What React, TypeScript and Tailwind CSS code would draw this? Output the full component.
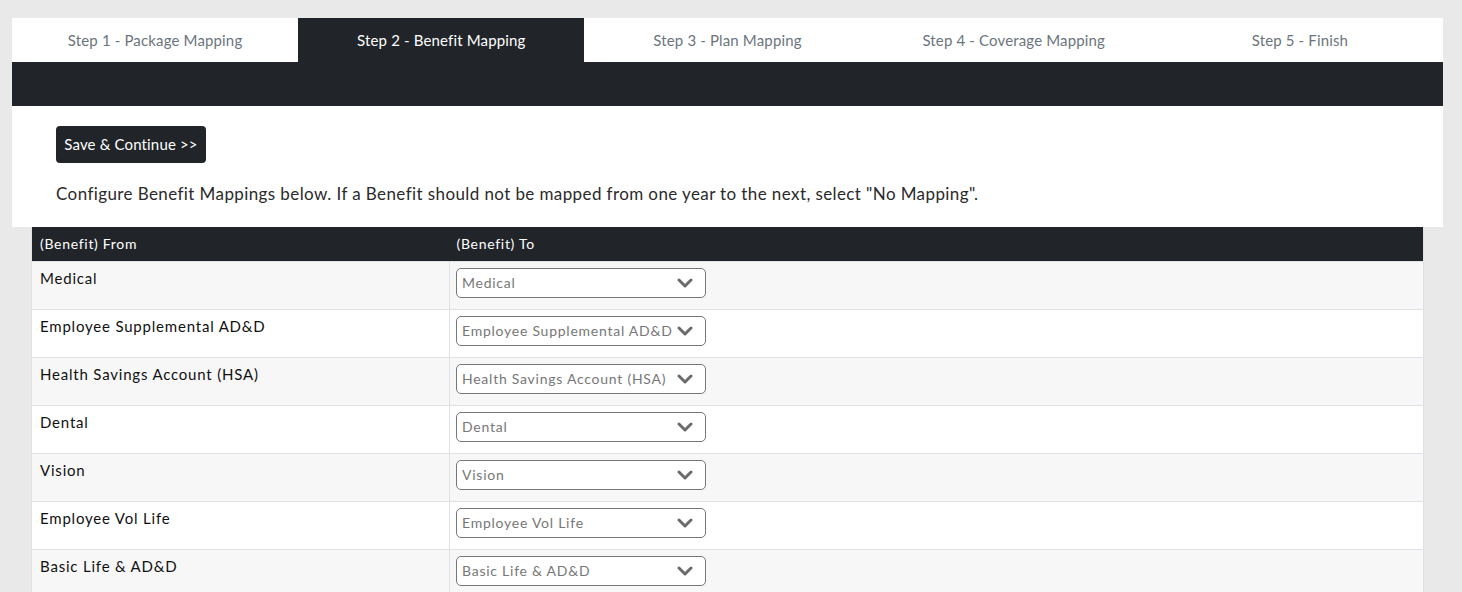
import React from "react";

const tabs = [
  "Step 1 - Package Mapping",
  "Step 2 - Benefit Mapping",
  "Step 3 - Plan Mapping",
  "Step 4 - Coverage Mapping",
  "Step 5 - Finish",
];

const rows = [
  "Medical",
  "Employee Supplemental AD&D",
  "Health Savings Account (HSA)",
  "Dental",
  "Vision",
  "Employee Vol Life",
  "Basic Life & AD&D",
];

function Chevron() {
  return (
    <svg width="16" height="10" viewBox="0 0 16 10" className="shrink-0">
      <path d="M2 2 L8 8 L14 2" fill="none" stroke="#6b6b6b" strokeWidth="3" strokeLinecap="round" strokeLinejoin="round" />
    </svg>
  );
}

export default function App() {
  return (
    <div
      className="min-h-[592px] bg-[#e9e9e9] pt-[18px] overflow-hidden"
      style={{ fontFamily: "Lato, 'Noto Sans', sans-serif" }}
    >
      <div className="ml-[12px] w-[1431px]">
        <div className="flex h-[44px] bg-white">
          {tabs.map((t, i) => (
            <div
              key={t}
              className={
                "flex-1 flex items-center justify-center text-[15px] tracking-[0.15px] " +
                (i === 1 ? "bg-[#212529] text-white" : "text-[#6c757d]")
              }
            >
              {t}
            </div>
          ))}
        </div>
        <div className="h-[44px] bg-[#212529]" />
        <div className="bg-white pl-[44px] pt-[20px] h-[121px]">
          <button className="h-[37px] w-[150px] rounded-[4px] bg-[#212529] text-white text-[15px] tracking-[0.15px]">
            Save &amp; Continue &gt;&gt;
          </button>
          <p className="mt-[19px] text-[17px] tracking-[0.4px] text-[#2a2a2a] leading-[24px]">
            Configure Benefit Mappings below. If a Benefit should not be mapped from one year to the next, select "No Mapping".
          </p>
        </div>
        <table className="ml-[19px] w-[1393px] border-collapse border-x border-[#dee2e6]">
          <thead>
            <tr className="h-[34px] bg-[#212529] text-white text-[14px] tracking-[0.7px] text-left">
              <th className="w-[418px] pl-[8px] font-normal">(Benefit) From</th>
              <th className="pl-[7px] font-normal">(Benefit) To</th>
            </tr>
          </thead>
          <tbody>
            {rows.map((r, i) => (
              <tr
                key={r}
                className={
                  "h-[48px] border-t border-[#dee2e6] " + (i % 2 === 0 ? "bg-[#f7f7f7]" : "bg-white")
                }
              >
                <td className="align-top pl-[8px] pt-[6px] text-[15px] tracking-[0.8px] text-[#111] leading-[21px] border-r border-[#dee2e6]">
                  {r}
                </td>
                <td className="align-top pl-[6px] pt-[6px]">
                  <div className="flex items-center justify-between w-[250px] h-[30px] border border-[#777] rounded-[5px] bg-white pl-[5px] pr-[12px]">
                    <span className="text-[14px] text-[#777] tracking-[0.75px] whitespace-nowrap overflow-hidden">{r}</span>
                    <Chevron />
                  </div>
                </td>
              </tr>
            ))}
          </tbody>
        </table>
      </div>
    </div>
  );
}
